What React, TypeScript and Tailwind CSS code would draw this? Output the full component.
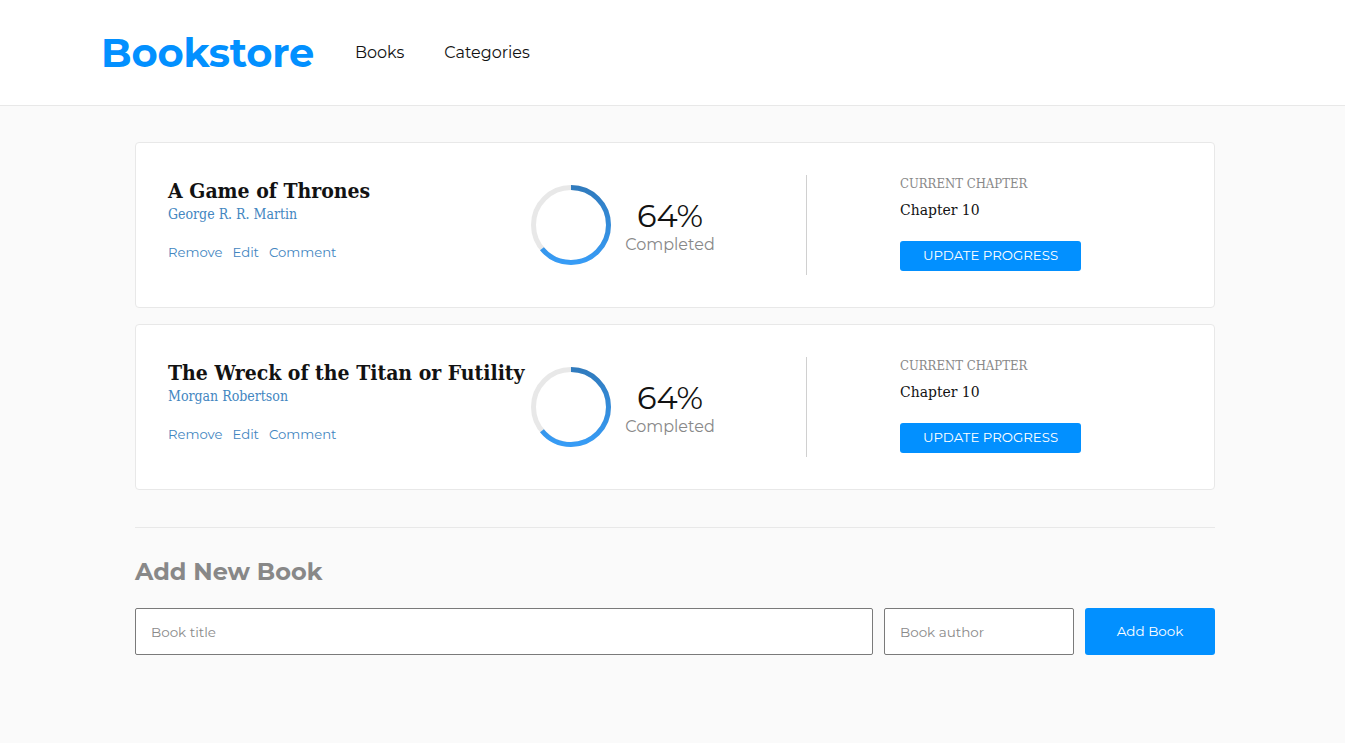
const BOOKS = [
  { title: 'A Game of Thrones', author: 'George R. R. Martin', progress: 64, chapter: 'Chapter 10' },
  { title: 'The Wreck of the Titan or Futility', author: 'Morgan Robertson', progress: 64, chapter: 'Chapter 10' },
]

const sans = "font-['Montserrat','Open_Sans','Noto_Sans',sans-serif]"
const slab = "font-['Roboto_Slab','DejaVu_Serif_Condensed','DejaVu_Serif',serif]"

function Ring({ value, id }: { value: number; id: string }) {
  const r = 37.5
  const c = 2 * Math.PI * r
  return (
    <svg width="80" height="80" viewBox="0 0 80 80" className="shrink-0">
      <defs>
        {/* the circle is rotated -90deg, so user x=1 sits at the top of the screen */}
        <linearGradient id={id} x1="1" y1="0" x2="0" y2="0">
          <stop offset="0%" stopColor="#307bbe" />
          <stop offset="100%" stopColor="#379cf6" />
        </linearGradient>
      </defs>
      <circle cx="40" cy="40" r={r} fill="none" stroke="#e8e8e8" strokeWidth="5" />
      <circle
        cx="40"
        cy="40"
        r={r}
        fill="none"
        stroke={`url(#${id})`}
        strokeWidth="5"
        strokeDasharray={`${(c * value) / 100} ${c}`}
        transform="rotate(-90 40 40)"
      />
    </svg>
  )
}

export default function App() {
  return (
    <div className={`min-h-[743px] bg-[#fafafa] ${sans}`}>
      {/* Header */}
      <header className="h-[106px] bg-white border-b border-[#e8e8e8] flex items-center pl-[101px]">
        <span className="text-[40px] font-bold text-[#0290ff] tracking-[-0.2px]">Bookstore</span>
        <nav className="flex gap-[40px] ml-[41px] text-[16px] text-[#121212]">
          <span>Books</span>
          <span>Categories</span>
        </nav>
      </header>

      <main className="w-[1080px] ml-[135px] pt-[36px]">
        <div className="flex flex-col gap-[16px]">
          {BOOKS.map((book, i) => (
            <div
              key={book.title}
              className="h-[166px] bg-white border border-[#e8e8e8] rounded-[4px] flex items-center pl-[32px]"
            >
              <div className="w-[363px] shrink-0 mb-[12px]">
                <h2 className={`${slab} text-[21px] leading-[26px] font-bold text-[#121212] whitespace-nowrap`}>
                  {book.title}
                </h2>
                <div className={`${slab} text-[14px] leading-[18px] mt-[1px] text-[#4386bf]`}>{book.author}</div>
                <div className="flex gap-[10px] mt-[21px] text-[13.2px] leading-[16px] text-[#4386bf]">
                  <span>Remove</span>
                  <span>Edit</span>
                  <span>Comment</span>
                </div>
              </div>

              <div className="w-[275px] shrink-0 flex items-center">
                <Ring value={book.progress} id={`ring-${i}`} />
                <div className="ml-[14px] w-[90px] text-center mt-[2px]">
                  <div className="text-[32px] leading-[36px] text-[#121212]">{book.progress}%</div>
                  <div className="text-[16px] leading-[20px] mt-[1px] text-[#888]">Completed</div>
                </div>
              </div>

              <div className="h-[100px] border-l border-[#d0d0d0]" />

              <div className="pl-[93px] mb-[3px]">
                <div className={`${slab} text-[13px] leading-[16px] text-[#888] uppercase`}>Current Chapter</div>
                <div className={`${slab} text-[15.5px] leading-[19px] mt-[9px] text-[#121212]`}>{book.chapter}</div>
                <button className="mt-[21px] w-[181px] h-[30px] rounded-[3px] bg-[#0290ff] text-white text-[13.3px]">
                  UPDATE PROGRESS
                </button>
              </div>
            </div>
          ))}
        </div>

        <div className="mt-[37px] border-t border-[#e8e8e8]" />

        <h3 className="mt-[29px] text-[24px] leading-[30px] font-bold text-[#888]">Add New Book</h3>

        <form className="flex gap-[11px] mt-[21px]" onSubmit={(e) => e.preventDefault()}>
          <input
            placeholder="Book title"
            className="w-[738px] h-[47px] bg-white border border-[#7a7a7a] rounded-[2px] px-[15px] text-[13.5px] placeholder:text-[#8a8a8a] outline-none"
          />
          <input
            placeholder="Book author"
            className="w-[190px] h-[47px] bg-white border border-[#7a7a7a] rounded-[2px] px-[15px] text-[13.5px] placeholder:text-[#8a8a8a] outline-none"
          />
          <button className="w-[130px] h-[47px] rounded-[3px] bg-[#0290ff] text-white text-[13.5px]">Add Book</button>
        </form>
      </main>
    </div>
  )
}
